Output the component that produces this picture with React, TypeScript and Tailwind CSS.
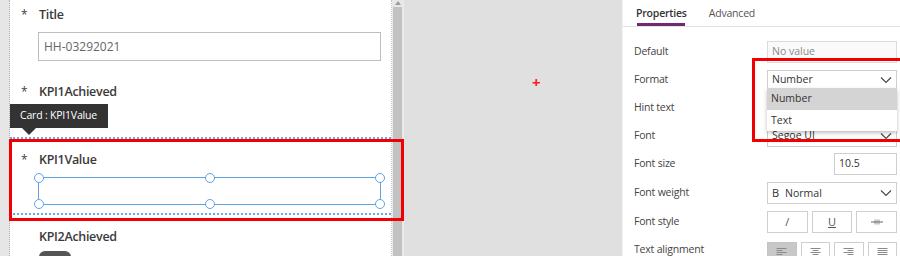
import React from 'react';

const font = { fontFamily: '"Open Sans", "Noto Sans", sans-serif' };

const Handle: React.FC<{ className: string }> = ({ className }) => (
    <span className={`absolute w-[10px] h-[10px] rounded-full bg-white border-[1.5px] border-[#5fa3e3] ${className}`}></span>
);

const Chevron = () => (
    <svg width="12" height="8" viewBox="0 0 12 8" className="text-[#444]">
        <polyline points="1,1.5 6,6.5 11,1.5" fill="none" stroke="currentColor" strokeWidth="1.1" />
    </svg>
);

const AlignIcon: React.FC<{ kind: 'left' | 'center' | 'right' | 'justify' }> = ({ kind }) => {
    const rows = [10, 6, 10, 6, 10];
    return (
        <svg width="11" height="10" viewBox="0 0 11 10">
            {rows.map((w, i) => {
                const len = kind === 'justify' ? 10 : w;
                const x = kind === 'left' || kind === 'justify' ? 0.5 : kind === 'right' ? 10.5 - len : (11 - len) / 2;
                return <line key={i} x1={x} x2={x + len} y1={0.5 + i * 2} y2={0.5 + i * 2} stroke="#8a8a8a" strokeWidth="1" />;
            })}
        </svg>
    );
};

const FieldLabel: React.FC<{ text: string; required?: boolean }> = ({ text, required = true }) => (
    <div className="flex items-center h-[24px]">
        <span className="w-[18px] text-[12px] text-[#444]">{required ? '*' : ''}</span>
        <span className="text-[12.5px] font-semibold tracking-[-0.3px] text-[#3a3a3a]">{text}</span>
    </div>
);

const PropRow: React.FC<{ label: string; h?: string; children?: React.ReactNode }> = ({ label, h = 'h-[28px]', children }) => (
    <div className={`flex items-center justify-between ${h} pl-[11px] pr-[3px]`}>
        <span className="text-[10.5px] tracking-[-0.2px] text-[#444]">{label}</span>
        {children}
    </div>
);

const App: React.FC = () => {
    return (
        <div className="relative w-[900px] h-[256px] flex overflow-hidden bg-[#e0e0e0]" style={font}>
            {/* left gutter */}
            <div className="w-[10px] shrink-0 bg-[#e6e6e6] border-r border-dotted border-[#b5b5b5]"></div>

            {/* form */}
            <div className="w-[382px] shrink-0 bg-white border-r border-dotted border-[#c4c4c4]">
                <div className="pl-[11px] pr-[10px] pt-[3px]">
                    <FieldLabel text="Title" />
                    <div className="ml-[17px] mt-[5px] h-[29px] border border-[#bdbdbd] flex items-center px-[5px] text-[12px] text-[#666]">
                        HH-03292021
                    </div>
                    <div className="mt-[19px]">
                        <FieldLabel text="KPI1Achieved" />
                    </div>
                </div>

                <div className="mt-[33px] border-t-2 border-b-2 border-dotted border-[#6aa6e0] h-[78px] pl-[11px] pr-[10px]">
                    <div className="mt-[9px]">
                        <FieldLabel text="KPI1Value" />
                    </div>
                    <div className="relative ml-[17px] mt-[5px] h-[28px] border-[1.5px] border-[#5fa3e3]">
                        <Handle className="-left-[5px] -top-[5px]" />
                        <Handle className="left-1/2 -ml-[5px] -top-[5px]" />
                        <Handle className="-right-[5px] -top-[5px]" />
                        <Handle className="-left-[5px] -bottom-[5px]" />
                        <Handle className="left-1/2 -ml-[5px] -bottom-[5px]" />
                        <Handle className="-right-[5px] -bottom-[5px]" />
                    </div>
                </div>

                <div className="pl-[11px]">
                    <div className="mt-[10px]">
                        <FieldLabel text="KPI2Achieved" required={false} />
                    </div>
                    <div className="ml-[18px] mt-[2px] w-[32px] h-[12px] rounded-full bg-[#555]"></div>
                </div>
            </div>

            {/* scrollbar */}
            <div className="w-[11px] shrink-0 flex flex-col bg-[#e8e8e8]">
                <div className="h-[7px] shrink-0 flex justify-center items-start">
                    <div className="w-0 h-0 border-l-[3px] border-r-[3px] border-b-[4px] border-l-transparent border-r-transparent border-b-[#9a9a9a] mt-[1px]"></div>
                </div>
                <div className="flex-1 bg-[#c2c2c2] mx-[1px]"></div>
            </div>
            <div className="w-[1px] shrink-0 bg-[#ebebeb]"></div>

            {/* canvas */}
            <div className="flex-1 bg-[#e0e0e0] relative">
                <span className="absolute left-[128px] top-[75px] text-[15px] leading-none font-bold text-[#ff1a1a]">+</span>
            </div>
            <div className="w-[1px] shrink-0 bg-[#f2f2f2]"></div>

            {/* properties panel */}
            <div className="w-[277px] shrink-0 bg-white">
                <div className="h-[27px] border-b border-[#e1e1e1] flex items-end pl-[13px] gap-[22px]">
                    <div className="flex flex-col items-center">
                        <span className="text-[10.5px] font-semibold tracking-[-0.2px] text-[#333] leading-none mb-[5px]">Properties</span>
                        <span className="w-[48px] h-[3px] bg-[#742774]"></span>
                    </div>
                    <span className="text-[10.5px] tracking-[-0.2px] text-[#555] leading-none mb-[8px]">Advanced</span>
                </div>
                <div className="pt-[11px]">
                    <PropRow label="Default">
                        <div className="w-[130px] h-[22px] border border-[#dcdcdc] bg-[#fafafa] flex items-center px-[4px] text-[10.5px] text-[#8a8a8a]">No value</div>
                    </PropRow>
                    <PropRow label="Format">
                        <div className="w-[130px] h-[21px] border border-[#cfcfcf] bg-white flex items-center justify-between px-[4px] text-[10.5px] text-[#333]">
                            <span>Number</span>
                            <Chevron />
                        </div>
                    </PropRow>
                    <PropRow label="Hint text" />
                    <PropRow label="Font">
                        <div className="w-[130px] h-[21px] border border-[#cfcfcf] bg-white flex items-center justify-between px-[4px] text-[10.5px] text-[#333]">
                            <span>Segoe UI</span>
                            <Chevron />
                        </div>
                    </PropRow>
                    <PropRow label="Font size">
                        <div className="w-[63px] h-[22px] border border-[#cfcfcf] bg-white flex items-center px-[4px] text-[10.5px] text-[#333]">10.5</div>
                    </PropRow>
                    <PropRow label="Font weight" h="h-[30px]">
                        <div className="w-[130px] h-[22px] border border-[#cfcfcf] bg-white flex items-center justify-between px-[4px] text-[10.5px] text-[#333]">
                            <span><span className="text-[11px] mr-[6px]">B</span>Normal</span>
                            <Chevron />
                        </div>
                    </PropRow>
                    <PropRow label="Font style">
                        <div className="w-[130px] flex gap-[4px]">
                            <div className="flex-1 h-[22px] border border-[#cfcfcf] flex items-center justify-center text-[11px] text-[#555]">/</div>
                            <div className="flex-1 h-[22px] border border-[#cfcfcf] flex items-center justify-center text-[11px] text-[#555]"><span className="underline">U</span></div>
                            <div className="flex-1 h-[22px] border border-[#cfcfcf] flex items-center justify-center">
                                <svg width="12" height="6" viewBox="0 0 12 6">
                                    <line x1="0" x2="12" y1="3" y2="3" stroke="#666" strokeWidth="1" />
                                    <line x1="4" x2="4" y1="0.5" y2="5.5" stroke="#777" strokeWidth="0.8" />
                                    <line x1="6" x2="6" y1="0.5" y2="5.5" stroke="#777" strokeWidth="0.8" />
                                    <line x1="8" x2="8" y1="0.5" y2="5.5" stroke="#777" strokeWidth="0.8" />
                                </svg>
                            </div>
                        </div>
                    </PropRow>
                    <PropRow label="Text alignment">
                        <div className="w-[130px] flex gap-[4px] mt-[6px]">
                            <div className="flex-1 h-[22px] border border-[#c4c4c4] bg-[#c8c8c8] flex items-center justify-center"><AlignIcon kind="left" /></div>
                            <div className="flex-1 h-[22px] border border-[#cfcfcf] flex items-center justify-center"><AlignIcon kind="center" /></div>
                            <div className="flex-1 h-[22px] border border-[#cfcfcf] flex items-center justify-center"><AlignIcon kind="right" /></div>
                            <div className="flex-1 h-[22px] border border-[#cfcfcf] flex items-center justify-center"><AlignIcon kind="justify" /></div>
                        </div>
                    </PropRow>
                </div>
            </div>

            {/* format dropdown menu */}
            <div className="absolute left-[767px] top-[88px] w-[130px] bg-white shadow-[0_2px_4px_rgba(0,0,0,0.25)] text-[10.5px] text-[#333]">
                <div className="h-[22px] bg-[#d4d4d4] flex items-center px-[4px]">Number</div>
                <div className="h-[21px] flex items-center px-[4px]">Text</div>
            </div>

            {/* tooltip */}
            <div className="absolute left-[10px] top-[104px]">
                <div className="w-[98px] h-[24px] bg-[#333] text-white text-[10.5px] tracking-[-0.2px] flex items-center pl-[10px]">Card : KPI1Value</div>
                <div className="ml-[12px] w-0 h-0 border-l-[7px] border-r-[7px] border-t-[7px] border-l-transparent border-r-transparent border-t-[#333]"></div>
            </div>

            {/* red annotations */}
            <div className="absolute left-[9px] top-[139px] w-[395px] h-[82px] border-[3px] border-[#f00000]"></div>
            <div className="absolute left-[752px] top-[58px] w-[160px] h-[84px] border-[3px] border-[#f00000]"></div>
        </div>
    );
};

export default App;
